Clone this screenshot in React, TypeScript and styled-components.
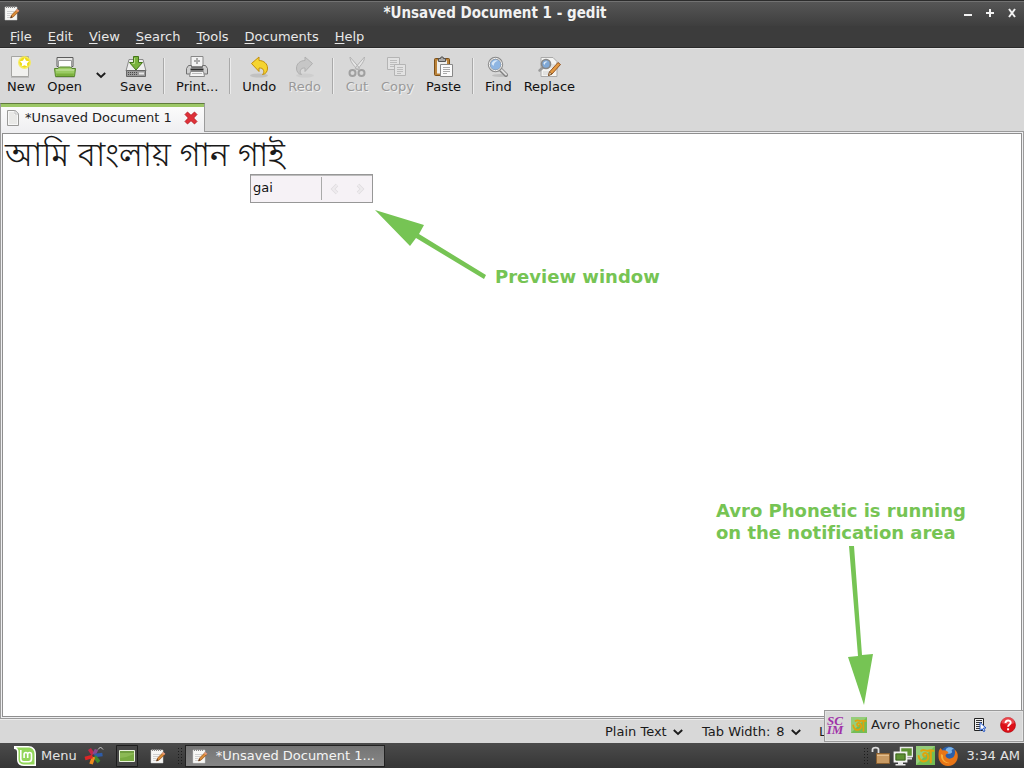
import React from "react";
import styled, { createGlobalStyle } from "styled-components";

const GlobalStyle = createGlobalStyle`
  * { box-sizing: border-box; }
  html, body { margin: 0; padding: 0; }
  body {
    font-family: "DejaVu Sans", sans-serif;
    font-size: 13px;
    line-height: 16px;
    color: #1a1a1a;
    background: #d8d8d8;
  }
  button, select, input, textarea { font: inherit; color: inherit; }
  button {
    border: 0;
    padding: 0;
    background: none;
    white-space: nowrap;
  }
  svg { display: block; flex: none; }
`;

const Desktop = styled.div`
  position: relative;
  display: flex;
  flex-direction: column;
  min-height: 100vh;
  overflow: hidden;
`;

/* ---------- window chrome ---------- */

const TitleBar = styled.header`
  display: grid;
  grid-template-columns: 32px 1fr 64px;
  align-items: center;
  height: 26px;
  padding: 0 6px 1px 4px;
  border-top: 1px solid #2c2c2c;
  box-shadow: inset 0 1px #727272;
  background: linear-gradient(#575757, #3e3e3e);
  color: #f2f2f2;
`;

const Title = styled.h1`
  margin: 0;
  font-family: "DejaVu Sans Condensed", "DejaVu Sans", sans-serif;
  font-size: 15px;
  line-height: 16px;
  font-weight: bold;
  text-align: center;
`;

const WindowButtons = styled.div`
  display: flex;
  justify-content: flex-end;
  gap: 10px;
`;

const MenuBar = styled.nav`
  display: flex;
  height: 22px;
  padding-left: 2px;
  border-bottom: 1px solid #2a2a2a;
  background: #3c3c3c;
  color: #e8e8e8;
`;

const MenuItem = styled.button`
  padding: 0 8px;
`;

const Mnemonic = styled.span`
  text-decoration: underline;
  text-decoration-thickness: 1px;
  text-underline-offset: 2px;
`;

/* ---------- toolbar ---------- */

const Toolbar = styled.div`
  display: flex;
  height: 55px;
  padding: 6px 1px 0;
  background: #d8d8d8;
  border-top: 1px solid #e6e6e6;
`;

const ToolButton = styled.button`
  display: flex;
  flex-direction: column;
  align-items: center;
  padding: 0 6px;
  color: #111;

  &:disabled {
    color: #999;
    text-shadow: 1px 1px #f0f0f0;
  }
`;

const DropButton = styled.button`
  display: flex;
  width: 26px;
  padding: 14px 8px;
`;

const Separator = styled.span`
  width: 2px;
  height: 36px;
  margin: 3px 5px 0;
  border-left: 1px solid #a9a9a9;
  border-right: 1px solid #ececec;
`;

/* ---------- notebook ---------- */

const Tabs = styled.div`
  display: flex;
  height: 29px;
  background: linear-gradient(#9b9b9b, #9b9b9b) 0 100% / 100% 1px no-repeat;
`;

const Tab = styled.div`
  display: flex;
  align-items: center;
  width: 205px;
  padding: 0 6px 1px 4px;
  border: solid #9b9b9b;
  border-top-color: #5f7b3c;
  border-width: 1px 1px 0;
  background: linear-gradient(#9cc766 3px, #fbfbfb 3px, #efeff1);
  color: #222;
`;

const TabLabel = styled.span`
  flex: 1;
  margin-left: 4px;
`;

const Notebook = styled.main`
  position: relative;
  display: flex;
  flex: 1;
  padding: 1px;
  border: solid #9b9b9b;
  border-width: 0 1px 1px;
  background: #efeff1;
`;

const Editor = styled.textarea`
  flex: 1;
  min-width: 0;
  resize: none;
  border: 1px solid #8f8f8f;
  border-radius: 0;
  outline: 0;
  padding: 2px;
  background: #fff;
  color: #1a1a1a;
  font-family: "Lohit Bengali", "Likhan", "Mukti Narrow", "FreeSans", "Noto Sans Bengali", sans-serif;
  font-weight: 300;
  font-size: 32px;
  line-height: 42px;
`;

const Preview = styled.div`
  position: absolute;
  left: 249px;
  top: 42px;
  display: flex;
  align-items: center;
  width: 123px;
  height: 29px;
  padding: 2px;
  border: 1px solid #979797;
  box-shadow: inset 0 1px #bdbdbd;
  background: #f6f2f6;
`;

const PreviewText = styled.span`
  width: 69px;
  height: 23px;
  line-height: 22px;
  color: #111;
  border-right: 1px solid #aaa;
`;

const PreviewArrows = styled.div`
  display: flex;
  gap: 10px;
  padding-left: 6px;
`;

const Note = styled.p<{ $left: number; $top: number }>`
  position: absolute;
  left: ${(p) => p.$left}px;
  top: ${(p) => p.$top}px;
  margin: 0;
  color: #76c454;
  font-size: 18px;
  line-height: 22px;
  font-weight: bold;
  font-variant-ligatures: none;
  white-space: nowrap;
`;

const NoteArrow = styled.svg<{ $left: number; $top: number }>`
  position: absolute;
  left: ${(p) => p.$left}px;
  top: ${(p) => p.$top}px;
  fill: #76c454;
`;

/* ---------- status bar ---------- */

const StatusBar = styled.footer`
  display: flex;
  justify-content: flex-end;
  height: 24px;
  border-top: 1px solid #eee;
  background: #d8d8d8;
`;

const StatusCell = styled.label<{ $width: number }>`
  display: flex;
  align-items: center;
  gap: 6px;
  width: ${(p) => p.$width}px;
  padding-left: 12px;
  white-space: nowrap;
`;

const StatusSelect = styled.select`
  appearance: none;
  border: 0;
  padding: 0;
  background: none;
`;

/* ---------- input method toolbar ---------- */

const ScimBar = styled.div`
  position: absolute;
  right: 0;
  bottom: 26px;
  display: flex;
  align-items: center;
  width: 200px;
  height: 32px;
  padding: 0 7px 2px 0;
  border: 1px solid #9a9a9a;
  box-shadow: inset 0 0 0 1px #e4e4e4;
  background: #d8d8d8;
`;

const ScimName = styled.button`
  display: flex;
  align-items: center;
  gap: 4px;
  margin: 0 auto 0 6px;
  color: #222;
`;

const ScimTools = styled.div`
  display: flex;
  gap: 12px;
`;

/* ---------- desktop panel ---------- */

const Panel = styled.div`
  display: flex;
  align-items: center;
  height: 25px;
  padding: 0 4px 0 14px;
  background: linear-gradient(#4b4b4b, #363636);
  color: #e4e4e4;
`;

const MenuButton = styled.button`
  display: flex;
  align-items: center;
  gap: 5px;
`;

const Launchers = styled.div`
  display: flex;
  align-items: center;
  gap: 12px;
  margin-left: 7px;
`;

const TaskButton = styled.button`
  display: flex;
  align-items: center;
  gap: 8px;
  width: 200px;
  height: 22px;
  margin-left: 3px;
  padding-left: 6px;
  border: 1px solid #222;
  background: linear-gradient(#757575, #868686);
  color: #f4f4f4;
`;

const Tray = styled.div`
  display: flex;
  align-items: center;
  gap: 3px;
  margin-left: auto;
`;

const Clock = styled.time`
  margin-left: 6px;
`;

/* ---------- drawings ---------- */

const Notepad = () => (
  <svg width="16" height="16" viewBox="0 0 16 16">
    <path d="M1 2h12v13H1z" fill="#f7f7f5" stroke="#ccc" strokeWidth=".5" />
    <path d="M2.500 1v2M4.500 1v2M6.500 1v2M8.500 1v2M10.500 1v2" stroke="#888" />
    <path d="M3 6.500h7M3 8.500h5M3 10.500h3M3 12.500h3" stroke="#d0d0d0" />
    <path d="M6.500 13l1-3L13 4.600l2 1.600L9.200 12z" fill="#d98b35" stroke="#8a4a1c" strokeWidth=".7" />
    <path d="M6.500 13l.7-2L8.300 12.200z" fill="#3a2a20" />
    <path d="M12 5.500l2 1.600 1.300-1.300-2-1.700z" fill="#e89a7c" />
  </svg>
);

const Chevron = () => (
  <svg width="10" height="12" viewBox="0 0 10 12">
    <path d="M.800 4l4.200 4 4.200-4" fill="none" stroke="#1c1c1c" strokeWidth="1.900" />
  </svg>
);

const NewIcon = () => (
  <svg width="24" height="24" viewBox="0 0 24 24">
    <path d="M2.500 1.500h17v20h-17z" fill="#f1f1ef" stroke="#a5a5a2" />
    <path d="M2 22.500h18" stroke="#aaa" opacity=".6" />
    <circle cx="15.500" cy="7.500" r="6.500" fill="#f8ec4a" opacity=".85" />
    <circle cx="15.500" cy="7.500" r="5" fill="#efdc18" />
    <path d="M15.500 3l1.500 2.800 3.100.5-2.200 2.200.5 3.100-2.900-1.400-2.900 1.400.5-3.100-2.200-2.200 3.100-.5z" fill="#fff" />
  </svg>
);

const OpenIcon = () => (
  <svg width="24" height="24" viewBox="0 0 24 24">
    <path d="M4 2.500h16v9H4z" fill="#e5e5e3" stroke="#5c5c5c" />
    <path d="M5.500 5.500h13v8h-13z" fill="#fdfdfd" stroke="#999" />
    <path d="M1.500 13.500h3.500l1.500-1.500h11l1.500 1.500h3.500l-1 8h-19z" fill="#9acb63" stroke="#55852a" />
    <path d="M3 15h18" stroke="#cfe8ae" />
    <path d="M3 18.500h18l-.5 2.500h-17z" fill="#7db13f" />
    <path d="M2.500 22.500h19" stroke="#999" opacity=".5" />
  </svg>
);

const SaveIcon = () => (
  <svg width="24" height="24" viewBox="0 0 24 24">
    <path d="M5 4.500h14l3 11.500H2z" fill="#eee" stroke="#8a8a8a" />
    <path d="M2.500 15.500h19v6h-19z" fill="#9a9a9a" stroke="#666" />
    <path d="M4 17.500h9M4 19.500h9" stroke="#4a4a4a" strokeDasharray="1 1" />
    <path d="M15 18.500h5" stroke="#e8e8e8" strokeWidth="2" />
    <path d="M9.500 1.500h5v6h4L12 15 5.500 7.500h4z" fill="#79b33c" stroke="#447519" />
    <path d="M10.500 3v5.500h-2" stroke="#b4da83" fill="none" />
  </svg>
);

const PrintIcon = () => (
  <svg width="24" height="24" viewBox="0 0 24 24">
    <path d="M6 1.500h12v10H6z" fill="#f2f2f2" stroke="#888" />
    <path d="M12 3v6M9 6h6" stroke="#aaa" strokeWidth="2" />
    <path d="M3.500 10.500h3v2h11v-2h3l2 3v5.500h-21v-5.500z" fill="#cfcfcf" stroke="#707070" />
    <path d="M5.500 14.500h13" stroke="#2c2c2c" strokeWidth="2" />
    <path d="M5.500 16.500h13l1 5h-15z" fill="#f4f4f4" stroke="#888" />
    <path d="M7 18.500h10" stroke="#bbb" />
  </svg>
);

const ArrowBack = ({ flipped = false }: { flipped?: boolean }) => (
  <svg width="24" height="24" viewBox="0 0 24 24">
    <g transform={flipped ? "translate(24 0) scale(-1 1)" : undefined}>
      <ellipse cx="12" cy="20.500" rx="9" ry="2" fill="#999" opacity={flipped ? 0.15 : 0.35} />
      <path
        d="M4.500 8.500l7.500-6.500v3.500c5 0 8.500 3.500 8.500 7.500 0 3.500-1.500 6-5 6.500 1.500-1.500 1.500-3 1-4.200-.7-2-2-2.300-4.500-2.300v3.500z"
        fill={flipped ? "#c6c6c6" : "#f5d431"}
        stroke={flipped ? "#b0b0b0" : "#c28e0c"}
        strokeLinejoin="round"
      />
    </g>
  </svg>
);

const CutIcon = () => (
  <svg width="24" height="24" viewBox="0 0 24 24" fill="none">
    <path d="M5 2c0 4 3 8 8 13l1.500-2zM19.500 2c0 4-3 8-8 13L10 13z" fill="#e6e6e6" stroke="#b3b3b3" />
    <circle cx="7.500" cy="18" r="3" stroke="#a0a0a0" strokeWidth="2" />
    <circle cx="16.500" cy="18" r="3" stroke="#a0a0a0" strokeWidth="2" />
  </svg>
);

const CopyIcon = () => (
  <svg width="24" height="24" viewBox="0 0 24 24">
    <path d="M2.500 2.500h12v12h-12z" fill="#e2e2e2" stroke="#b4b4b4" />
    <path d="M5 5.500h7M5 7.500h7M5 9.500h7M5 11.500h4" stroke="#bcbcbc" />
    <path d="M9.500 9.500h11v11h-11z" fill="#e2e2e2" stroke="#b4b4b4" />
    <path d="M12 12.500h6M12 14.500h6M12 16.500h6M12 18.500h4" stroke="#bcbcbc" />
  </svg>
);

const PasteIcon = () => (
  <svg width="24" height="24" viewBox="0 0 24 24">
    <rect x="3.500" y="3.500" width="15" height="17" rx="1" fill="#bb833a" stroke="#7b4f18" />
    <path d="M6 5.500h10v13H6z" fill="#eeeeec" />
    <path d="M7.500 6.500v-3h2l.5-1.500h2l.5 1.500h2v3z" fill="#aaa" stroke="#555" />
    <path d="M9.500 9.500h12v12h-12z" fill="#fafafa" stroke="#888" />
    <path d="M12 12.500h7M12 14.500h7M12 16.500h7M12 18.500h4" stroke="#aaa" />
  </svg>
);

const FindIcon = () => (
  <svg width="24" height="24" viewBox="0 0 24 24">
    <ellipse cx="14" cy="20.500" rx="8" ry="1.500" fill="#999" opacity=".4" />
    <path d="M14 14l6 6" stroke="#808080" strokeWidth="4" strokeLinecap="round" />
    <path d="M15 14.500l5 5" stroke="#ddd" strokeWidth="2" strokeLinecap="round" />
    <circle cx="9.500" cy="9.500" r="6.500" fill="#8eb5e2" stroke="#8a8a8a" strokeWidth="2.400" />
    <circle cx="9.500" cy="9.500" r="6.200" fill="none" stroke="#f2f2f2" />
    <path d="M5.500 9c1-3.500 5-4.500 6.500-3-2 0-4 1.500-4.500 5z" fill="#d9e8f7" />
  </svg>
);

const ReplaceIcon = () => (
  <svg width="24" height="24" viewBox="0 0 24 24">
    <path d="M4 2.500h12l4 4v15H4z" fill="#f3f3f1" stroke="#aaa" />
    <path d="M12 10h6M12 12h5M6 17h8M6 19h6" stroke="#d0d0d0" />
    <path d="M6 12.500l-3.500 3" stroke="#999" strokeWidth="2.500" strokeLinecap="round" />
    <circle cx="9" cy="9" r="4.500" fill="#7fa8d6" stroke="#888" strokeWidth="1.700" />
    <path d="M6.500 8.500c.5-2 3-2.500 4-1.500-1.500 0-2.500 1-3 3z" fill="#e1edf9" />
    <path d="M11.500 20.500l1-3.600L21 7.500l2.500 2L15 19z" fill="#e39a43" stroke="#8b4a18" strokeWidth=".9" />
    <path d="M11.500 20.500l1-3.600L15 19z" fill="#f0d9b0" stroke="#5a3514" strokeWidth=".6" />
  </svg>
);

const PageIcon = () => (
  <svg width="16" height="16" viewBox="0 0 16 16">
    <path d="M2.500.500h8l3 3v12h-11z" fill="#e9e9e7" stroke="#9a9a98" />
    <path d="M3.500 1.500h6v3h3v10h-9z" fill="none" stroke="#f8f8f8" />
    <path d="M10 .500v3.500h3.500z" fill="#fff" stroke="#bbb" />
  </svg>
);

const CloseIcon = () => (
  <svg width="14" height="14" viewBox="0 0 14 14">
    <path d="M3.500 1L7 4.300 10.500 1 13 3.500 9.700 7l3.300 3.500-2.500 2.500L7 9.700 3.500 13 1 10.500 4.300 7 1 3.500z" fill="#df3038" stroke="#b3141c" strokeWidth=".8" />
  </svg>
);

const Glyph = ({ d }: { d: string }) => (
  <svg width="12" height="12" viewBox="0 0 12 12">
    <path d={d} fill="none" stroke="#f2f2f2" strokeWidth="2" />
  </svg>
);

const Step = ({ d }: { d: string }) => (
  <svg width="14" height="14" viewBox="0 0 14 14">
    <path d={d} fill="none" stroke="#dedbde" strokeWidth="3.400" />
    <path d={d} fill="none" stroke="#eeebee" strokeWidth="2" />
  </svg>
);

const AvroIcon = ({ size }: { size: number }) => (
  <svg width={size} height={size} viewBox="0 0 18 18">
    <path d="M0 0h18v18H0z" fill="#74bd55" />
    <path d="M0 0h18L0 18z" fill="#b5dea0" opacity=".5" />
    <path
      d="M5 4.500c2.500-2 4 .5 6 0s3-.5 5.500 0M14 4.500v11M2.500 9.500c.5 3.500 3 5.500 5.500 5s4-2.500 3.500-5-2.500-3.500-4-2.500-.5 3 1 3"
      fill="none"
      stroke="#dfa30d"
      strokeWidth="2"
      strokeLinecap="round"
    />
  </svg>
);

const ScimLogo = styled.span`
  width: 20px;
  font-family: "Liberation Serif", serif;
  font-size: 13px;
  line-height: 9px;
  font-style: italic;
  font-weight: bold;
  text-align: center;
  color: #a031a8;
`;

const ScimMenuIcon = () => (
  <svg width="16" height="16" viewBox="0 0 16 16">
    <path d="M2.500 1.500h9v12h-9z" fill="#eee" stroke="#222" />
    <path d="M4 3.500h6M4 5.500h6M4 7.500h6M4 9.500h4M4 11.500h4" stroke="#333" />
    <path d="M8 5.500l6 5.500h-2.500l1.500 3-1.500.6-1.300-2.800L8 13.500z" fill="#fff" stroke="#2558c8" />
  </svg>
);

const HelpIcon = () => (
  <svg width="16" height="16" viewBox="0 0 16 16">
    <circle cx="8" cy="8" r="7.500" fill="#dd1018" stroke="#a8080e" strokeWidth=".6" />
    <path d="M1.500 6a6.500 6 0 0 1 13 0q-6 3-13 0z" fill="#f4686c" opacity=".6" />
    <path d="M5.500 6c0-3.300 5.200-3.200 5.200-.3 0 1.900-2.600 1.800-2.600 4" fill="none" stroke="#fff" strokeWidth="1.900" />
    <path d="M7.100 11.300h2v2h-2z" fill="#fff" />
  </svg>
);

const MintLogo = () => (
  <svg width="22" height="20" viewBox="0 0 22 20">
    <path d="M0 0h14c5 0 8 3 8 8v12H10c-5 0-7-3-7-7V6C3 4 2 3 0 3z" fill="#fff" />
    <path d="M2 1.500h12c4 0 6.500 2.500 6.500 6.500v10.500H10c-3.500 0-5.500-2-5.500-5.500V6c0-2-.5-3.500-2.500-4.500z" fill="#93d65a" />
    <path d="M6.800 4v9q0 2.700 3 2.700h4.700q3 0 3-2.700V8.500q0-2-1.900-2t-1.900 2V12M13.700 8.500q0-2-1.800-2t-1.800 2V12" fill="none" stroke="#fff" strokeWidth="1.600" />
  </svg>
);

const PinwheelIcon = () => (
  <svg width="20" height="20" viewBox="0 0 20 20" fill="none" strokeWidth="3.600">
    <path d="M9 8.500L5.500 3" stroke="#c22847" />
    <path d="M10 8.500l2.500-5" stroke="#87488f" />
    <path d="M10.500 9.500l8-1" stroke="#2e5ca8" />
    <path d="M10.500 10.500l4.500 5.500" stroke="#3f8a2c" />
    <path d="M9.500 11l-2.500 7" stroke="#ef8a1d" />
    <path d="M8.500 10.500l-7.500 2" stroke="#dc2626" />
    <path d="M14 3.500L16.500 1 19 3.500" stroke="#ccc" strokeWidth="1" />
  </svg>
);

const DesktopIcon = () => (
  <svg width="22" height="22" viewBox="0 0 22 22">
    <path d="M.500.500h21v21H.500z" fill="#454545" stroke="#1d1d1d" />
    <path d="M3.500 5.500h15v11h-15z" fill="#8cb955" stroke="#e9f3dc" />
    <path d="M4 7h14" stroke="#54812c" />
    <path d="M4 16v-3q8-1 14-4v7z" fill="#79ab42" />
  </svg>
);

const Grip = () => (
  <svg width="4" height="18" viewBox="0 0 4 18">
    <path d="M.500 1v17M3.500 1v17" stroke="#1c1c1c" strokeDasharray="1 2" />
  </svg>
);

const LockIcon = () => (
  <svg width="19" height="19" viewBox="0 0 19 19">
    <path d="M1.500 6V3.500c0-2.500 6-2.500 6 0V8" fill="none" stroke="#ddd" strokeWidth="1.800" />
    <path d="M5.500 7.500h13v10h-13z" fill="#c89a63" stroke="#8a6030" />
    <path d="M6 9.500h12" stroke="#e2bd8c" />
  </svg>
);

const NetworkIcon = () => (
  <svg width="20" height="20" viewBox="0 0 20 20">
    <path d="M7.500 1.500h12v9h-12z" fill="#5d9132" stroke="#e8e8e8" strokeWidth="1.500" />
    <path d="M12 12.500h7" stroke="#ddd" strokeWidth="2" />
    <path d="M1.500 6.500h12v9h-12z" fill="#5d9132" stroke="#f2f2f2" strokeWidth="1.800" />
    <path d="M3 8h9v6H3z" fill="none" stroke="#3a5a22" strokeWidth=".8" />
    <path d="M5 16h5v2h2.500v1.500h-10V18H5z" fill="#e8e8e8" />
  </svg>
);

const FirefoxIcon = () => (
  <svg width="20" height="20" viewBox="0 0 20 20">
    <circle cx="10.500" cy="9" r="8.500" fill="#2c5fa9" />
    <path d="M8 3c2-2.500 6-2 8 0-2 0-3 1-2 2.500S10 9 9 7 7 5 8 3z" fill="#7cb4e6" />
    <path d="M1 4.500L2.500 2l2 2.500C7 4 9 5 10.500 6.500L7.500 9c0 3 3.500 5 7.500 2.500 2-1.500 2.500-5 1.500-8 3 2 3.500 5 3.200 8C19 16.500 15 20 10 20S.500 16 .500 10.500c0-2.500 0-4 .5-6z" fill="#e87516" />
    <path d="M3 8c-1 6 4 10 9 9-7-1-7-5-7-8z" fill="#f6b03a" />
  </svg>
);

/* ---------- page ---------- */

const menus = ["File", "Edit", "View", "Search", "Tools", "Documents", "Help"];

type ToolProps = { label: string; icon: React.ReactNode; disabled?: boolean };

const Tool = ({ label, icon, disabled }: ToolProps) => (
  <ToolButton type="button" disabled={disabled}>
    {icon}
    {label}
  </ToolButton>
);

export default function App() {
  return (
    <>
      <GlobalStyle />
      <Desktop>
        <TitleBar>
          <Notepad />
          <Title>*Unsaved Document 1 - gedit</Title>
          <WindowButtons>
            <button type="button" aria-label="Minimize"><Glyph d="M2 8h8" /></button>
            <button type="button" aria-label="Maximize"><Glyph d="M2 6h8M6 2v8" /></button>
            <button type="button" aria-label="Close"><Glyph d="M3 2l6 8M9 2l-6 8" /></button>
          </WindowButtons>
        </TitleBar>

        <MenuBar>
          {menus.map((name) => (
            <MenuItem type="button" key={name}>
              <Mnemonic>{name[0]}</Mnemonic>
              {name.slice(1)}
            </MenuItem>
          ))}
        </MenuBar>

        <Toolbar>
          <Tool label="New" icon={<NewIcon />} />
          <Tool label="Open" icon={<OpenIcon />} />
          <DropButton type="button" aria-label="Open recent"><Chevron /></DropButton>
          <Tool label="Save" icon={<SaveIcon />} />
          <Separator />
          <Tool label="Print..." icon={<PrintIcon />} />
          <Separator />
          <Tool label="Undo" icon={<ArrowBack />} />
          <Tool label="Redo" icon={<ArrowBack flipped />} disabled />
          <Separator />
          <Tool label="Cut" icon={<CutIcon />} disabled />
          <Tool label="Copy" icon={<CopyIcon />} disabled />
          <Tool label="Paste" icon={<PasteIcon />} />
          <Separator />
          <Tool label="Find" icon={<FindIcon />} />
          <Tool label="Replace" icon={<ReplaceIcon />} />
        </Toolbar>

        <Tabs>
          <Tab>
            <PageIcon />
            <TabLabel>*Unsaved Document 1</TabLabel>
            <button type="button" aria-label="Close document"><CloseIcon /></button>
          </Tab>
        </Tabs>

        <Notebook>
          <Editor aria-label="Document text" spellCheck={false} defaultValue="আমি বাংলায় গান গাই" />
          <Preview>
            <PreviewText>gai</PreviewText>
            <PreviewArrows>
              <button type="button" aria-label="Previous candidates"><Step d="M9 3L5 7l4 4" /></button>
              <button type="button" aria-label="Next candidates"><Step d="M6 3l4 4-4 4" /></button>
            </PreviewArrows>
          </Preview>
          <NoteArrow $left={374} $top={78} width="112" height="70">
            <path d="M0 0L49 15 44 24 111 65 109 69 41 28 35 36z" />
          </NoteArrow>
          <Note $left={494} $top={134}>Preview window</Note>
          <Note $left={715} $top={368}>
            Avro Phonetic is running
            <br />
            on the notification area
          </Note>
          <NoteArrow $left={846} $top={414} width="28" height="160">
            <path d="M2 0H7L15 109 26 108 17 159 1 111 11 110z" />
          </NoteArrow>
        </Notebook>

        <StatusBar>
          <StatusCell $width={97}>
            <StatusSelect aria-label="Highlight mode"><option>Plain Text</option></StatusSelect>
            <Chevron />
          </StatusCell>
          <StatusCell $width={117}>
            Tab Width:
            <StatusSelect><option>8</option></StatusSelect>
            <Chevron />
          </StatusCell>
          <StatusCell as="div" $width={217}>L</StatusCell>
        </StatusBar>

        <Panel>
          <MenuButton type="button"><MintLogo />Menu</MenuButton>
          <Launchers>
            <button type="button" aria-label="Applications"><PinwheelIcon /></button>
            <button type="button" aria-label="Show desktop"><DesktopIcon /></button>
            <button type="button" aria-label="Text editor"><Notepad /></button>
            <Grip />
          </Launchers>
          <TaskButton type="button"><Notepad />*Unsaved Document 1...</TaskButton>
          <Tray>
            <Grip />
            <LockIcon />
            <NetworkIcon />
            <AvroIcon size={19} />
            <FirefoxIcon />
            <Clock>3:34 AM</Clock>
          </Tray>
        </Panel>

        <ScimBar>
          <ScimLogo>SC<br />IM</ScimLogo>
          <ScimName type="button"><AvroIcon size={16} />Avro Phonetic</ScimName>
          <ScimTools>
            <button type="button" aria-label="Input method menu"><ScimMenuIcon /></button>
            <button type="button" aria-label="Help"><HelpIcon /></button>
          </ScimTools>
        </ScimBar>
      </Desktop>
    </>
  );
}
